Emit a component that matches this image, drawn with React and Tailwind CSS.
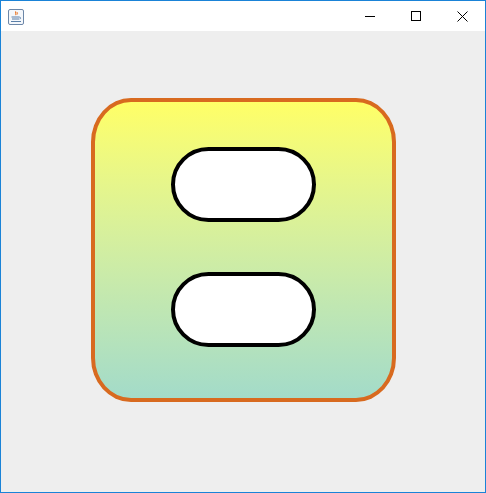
import React from 'react';

// Small Java coffee-cup icon shown in the frame's title bar
const JavaIcon = () => (
  <svg width="16" height="16" viewBox="0 0 16 16">
    <rect x="0.5" y="0.5" width="15" height="15" rx="1.5" fill="#f4f7fb" stroke="#6c87a8" />
    <path d="M8 2.5c-1.5 1.2 1 2-0.5 3.5" stroke="#e9782a" strokeWidth="1.2" fill="none" />
    <path d="M9.5 3c-1 1 0.8 1.4-0.3 2.5" stroke="#e9782a" strokeWidth="1" fill="none" />
    <path d="M3.5 8h8M4 10h7M3 12.5h10" stroke="#5a7fa8" strokeWidth="1.1" />
    <path d="M11.5 8.2c1.5 0 1.5 1.8 0 1.8" stroke="#5a7fa8" strokeWidth="0.9" fill="none" />
  </svg>
);

const TitleBar = () => (
  <div className="flex h-[30px] items-center bg-white">
    <div className="ml-[7px] mt-[1px]">
      <JavaIcon />
    </div>
    <div className="flex-1" />
    <div className="flex h-full items-center">
      <div className="flex h-full w-[46px] items-center justify-center">
        <div className="h-px w-[10px] bg-black" />
      </div>
      <div className="flex h-full w-[46px] items-center justify-center">
        <div className="h-[10px] w-[10px] border border-black" />
      </div>
      <div className="flex h-full w-[46px] items-center justify-center">
        <svg width="11" height="11" viewBox="0 0 11 11">
          <path d="M0.5 0.5L10.5 10.5M10.5 0.5L0.5 10.5" stroke="#000" strokeWidth="1" />
        </svg>
      </div>
    </div>
  </div>
);

const Pill = () => (
  <div className="h-[75px] w-[145px] rounded-full border-[4px] border-black bg-white" />
);

export default function App() {
  return (
    <div className="h-[493px] w-[486px] border border-[#1a83d7] bg-[#eeeeee]">
      <TitleBar />
      <div className="flex justify-center pl-[1px] pt-[67px]">
        <div className="flex h-[304px] w-[305px] flex-col items-center rounded-[40px/44px] border-[4px] border-[#d86a1f] bg-gradient-to-b from-[#ffff66] to-[#a3dbc9] pt-[45px]">
          <Pill />
          <div className="h-[50px]" />
          <Pill />
        </div>
      </div>
    </div>
  );
}
